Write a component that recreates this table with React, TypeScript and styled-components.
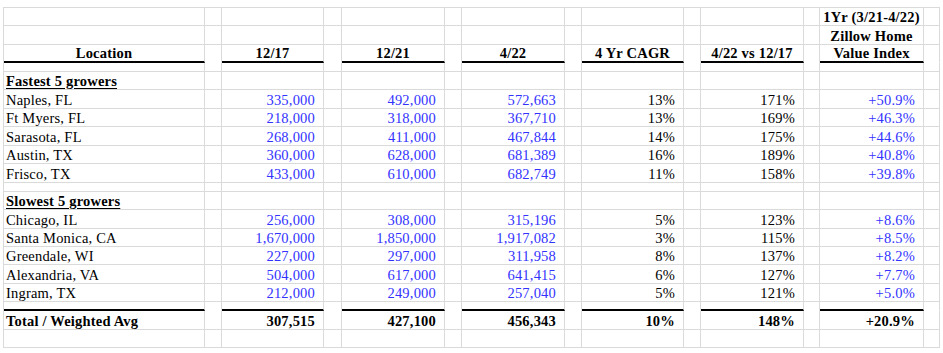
import React from "react";
import styled, { createGlobalStyle, css } from "styled-components";

const GlobalStyle = createGlobalStyle`
  html, body {
    margin: 0;
    padding: 0;
    background: #ffffff;
  }
  body {
    font-family: "Liberation Serif", "Times New Roman", serif;
    color: #000000;
  }
`;

const GRID = "#dadada";
const BLUE = "#3333ff";
const COLUMNS =
  "201px 17px 102px 18px 103px 17px 103px 17px 102px 17px 103px 16px 104px 16px";

const Page = styled.div`
  padding: 7px 0 0 3px;
`;

const Sheet = styled.div`
  display: flex;
  flex-direction: column;
  width: max-content;
  border-top: 1px solid ${GRID};
  border-left: 1px solid ${GRID};
`;

const Row = styled.div<{ $h: number }>`
  display: grid;
  grid-template-columns: ${COLUMNS};
  height: ${({ $h }) => $h}px;
`;

type Align = "left" | "right" | "center";

const Cell = styled.div<{
  $align?: Align;
  $bold?: boolean;
  $blue?: boolean;
  $rule?: boolean;
  $bare?: boolean;
}>`
  box-sizing: border-box;
  display: flex;
  align-items: flex-end;
  justify-content: ${({ $align }) =>
    $align === "right" ? "flex-end" : $align === "center" ? "center" : "flex-start"};
  padding: ${({ $align }) =>
    $align === "right" ? "0 8px 0 0" : $align === "center" ? "0" : "0 0 0 2px"};
  border-right: 1px solid ${GRID};
  border-bottom: 1px solid ${GRID};
  font-size: 14.5px;
  letter-spacing: 0.2px;
  line-height: 15px;
  white-space: nowrap;
  overflow: hidden;
  font-weight: ${({ $bold }) => ($bold ? 700 : 400)};
  color: ${({ $blue }) => ($blue ? BLUE : "#000")};

  ${({ $rule }) =>
    $rule &&
    css`
      border-bottom: 2px solid #000;
    `}
  ${({ $bare }) =>
    $bare &&
    css`
      border-bottom-color: transparent;
    `}
`;

const Section = styled.span`
  font-weight: 700;
  text-decoration: underline;
  text-underline-offset: 2px;
`;

type Values = [string, string, string, string, string, string, string];

const fastest: Values[] = [
  ["Naples, FL", "335,000", "492,000", "572,663", "13%", "171%", "+50.9%"],
  ["Ft Myers, FL", "218,000", "318,000", "367,710", "13%", "169%", "+46.3%"],
  ["Sarasota, FL", "268,000", "411,000", "467,844", "14%", "175%", "+44.6%"],
  ["Austin, TX", "360,000", "628,000", "681,389", "16%", "189%", "+40.8%"],
  ["Frisco, TX", "433,000", "610,000", "682,749", "11%", "158%", "+39.8%"],
];

const slowest: Values[] = [
  ["Chicago, IL", "256,000", "308,000", "315,196", "5%", "123%", "+8.6%"],
  ["Santa Monica, CA", "1,670,000", "1,850,000", "1,917,082", "3%", "115%", "+8.5%"],
  ["Greendale, WI", "227,000", "297,000", "311,958", "8%", "137%", "+8.2%"],
  ["Alexandria, VA", "504,000", "617,000", "641,415", "6%", "127%", "+7.7%"],
  ["Ingram, TX", "212,000", "249,000", "257,040", "5%", "121%", "+5.0%"],
];

const total: Values = [
  "Total / Weighted Avg",
  "307,515",
  "427,100",
  "456,343",
  "10%",
  "148%",
  "+20.9%",
];

const blueCols = [1, 2, 3, 6];

// one spreadsheet row: 7 data columns, each followed by a narrow spacer column
const SheetRow: React.FC<{
  h: number;
  cells?: React.ReactNode[];
  kind?: "header" | "data" | "total" | "title";
  rule?: boolean;
}> = ({ h, cells = [], kind = "data", rule }) => {
  const out: React.ReactNode[] = [];
  for (let i = 0; i < 7; i++) {
    const v = cells[i];
    let align: Align = i === 0 ? "left" : "right";
    if (kind === "header") align = "center";
    out.push(
      <Cell
        key={"c" + i}
        $align={align}
        $bold={kind === "header" || kind === "total"}
        $blue={kind === "data" && blueCols.includes(i)}
        $rule={rule}
      >
        {v}
      </Cell>
    );
    out.push(<Cell key={"s" + i} $bare={rule} />);
  }
  return <Row $h={h}>{out}</Row>;
};

const App: React.FC = () => {
  const fastH = [19, 18, 19, 18, 19];
  const slowH = [19, 18, 18, 19, 18];
  return (
    <Page>
      <GlobalStyle />
      <Sheet>
        <SheetRow h={18} kind="header" cells={["", "", "", "", "", "", "1Yr (3/21-4/22)"]} />
        <SheetRow h={19} kind="header" cells={["", "", "", "", "", "", "Zillow Home"]} />
        <SheetRow
          h={18}
          kind="header"
          rule
          cells={["Location", "12/17", "12/21", "4/22", "4 Yr CAGR", "4/22 vs 12/17", "Value Index"]}
        />
        <SheetRow h={9} />
        <SheetRow h={18} kind="title" cells={[<Section key="t">Fastest 5 growers</Section>]} />
        {fastest.map((r, i) => (
          <SheetRow key={r[0]} h={fastH[i]} cells={r} />
        ))}
        <SheetRow h={9} />
        <SheetRow h={18} kind="title" cells={[<Section key="t">Slowest 5 growers</Section>]} />
        {slowest.map((r, i) => (
          <SheetRow key={r[0]} h={slowH[i]} cells={r} />
        ))}
        <SheetRow h={9} rule />
        <SheetRow h={19} kind="total" cells={total} />
        <SheetRow h={18} />
      </Sheet>
    </Page>
  );
};

export default App;
